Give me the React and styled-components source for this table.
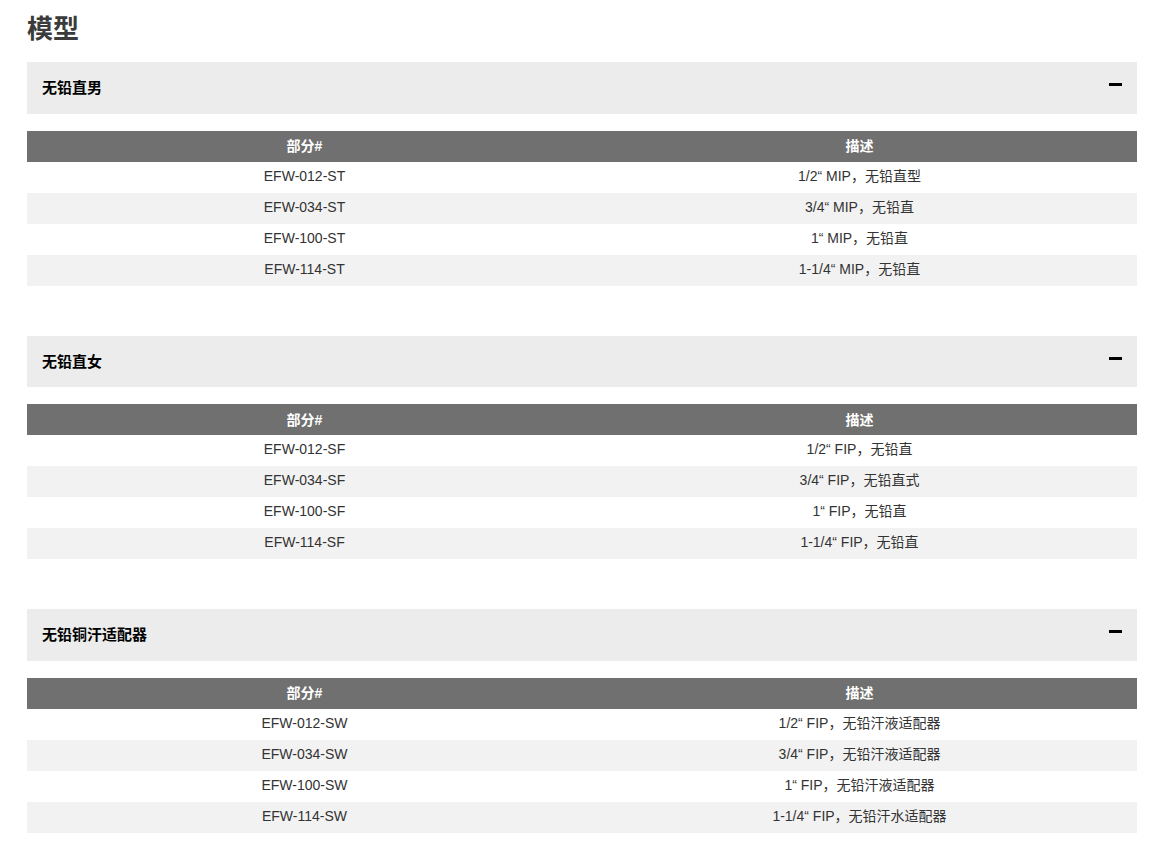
import styled, { createGlobalStyle } from 'styled-components';

const GlobalStyle = createGlobalStyle`
  body {
    margin: 0;
    background: #ffffff;
    font-family: "Liberation Sans", Arial, "Noto Sans CJK SC", sans-serif;
  }
`;

const sections = [
  {
    title: '无铅直男',
    rows: [
      ['EFW-012-ST', '1/2“ MIP，无铅直型'],
      ['EFW-034-ST', '3/4“ MIP，无铅直'],
      ['EFW-100-ST', '1“ MIP，无铅直'],
      ['EFW-114-ST', '1-1/4“ MIP，无铅直'],
    ],
  },
  {
    title: '无铅直女',
    rows: [
      ['EFW-012-SF', '1/2“ FIP，无铅直'],
      ['EFW-034-SF', '3/4“ FIP，无铅直式'],
      ['EFW-100-SF', '1“ FIP，无铅直'],
      ['EFW-114-SF', '1-1/4“ FIP，无铅直'],
    ],
  },
  {
    title: '无铅铜汗适配器',
    rows: [
      ['EFW-012-SW', '1/2“ FIP，无铅汗液适配器'],
      ['EFW-034-SW', '3/4“ FIP，无铅汗液适配器'],
      ['EFW-100-SW', '1“ FIP，无铅汗液适配器'],
      ['EFW-114-SW', '1-1/4“ FIP，无铅汗水适配器'],
    ],
  },
];

export default function App() {
  return (
    <Page>
      <GlobalStyle />
      <Title>模型</Title>
      {sections.map((s) => (
        <Section key={s.title}>
          <AccordionHead>
            <HeadText>{s.title}</HeadText>
            <Minus />
          </AccordionHead>
          <Table>
            <thead>
              <tr>
                <Th>部分#</Th>
                <Th>描述</Th>
              </tr>
            </thead>
            <tbody>
              {s.rows.map((r, i) => (
                <Row key={r[0]} $odd={i % 2 === 1}>
                  <Td>{r[0]}</Td>
                  <Td>{r[1]}</Td>
                </Row>
              ))}
            </tbody>
          </Table>
        </Section>
      ))}
    </Page>
  );
}

const Page = styled.div`
  width: 1110px;
  padding: 0 29px 0 27px;
`;

const Title = styled.h1`
  margin: 0;
  padding-top: 13px;
  height: 62px;
  box-sizing: border-box;
  font-family: "Liberation Sans", "Noto Sans CJK SC", sans-serif;
  font-size: 26px;
  font-weight: 700;
  line-height: 32px;
  color: #3b3b3b;
`;

const Section = styled.section`
  margin-bottom: 50px;
`;

const AccordionHead = styled.div`
  display: flex;
  align-items: center;
  justify-content: space-between;
  height: 51.5px;
  padding: 0 15px;
  background: #ececec;
  margin-bottom: 17px;
`;

const HeadText = styled.div`
  font-family: "Liberation Sans", "Noto Sans CJK SC", sans-serif;
  font-size: 15px;
  font-weight: 700;
  color: #000000;
  margin-top: -2px;
`;

const Minus = styled.span`
  display: block;
  width: 13px;
  height: 3px;
  background: #000000;
  margin-top: -6px;
`;

const Table = styled.table`
  width: 100%;
  border-collapse: collapse;
  table-layout: fixed;
`;

const Th = styled.th`
  height: 31px;
  padding: 0;
  background: #707070;
  color: #ffffff;
  font-family: "Liberation Sans", "Noto Sans CJK SC", sans-serif;
  font-size: 14px;
  font-weight: 700;
  line-height: 28px;
  text-align: center;
`;

const Row = styled.tr`
  background: ${(p) => (p.$odd ? '#f2f2f2' : '#ffffff')};
`;

const Td = styled.td`
  height: 31px;
  padding: 0;
  color: #333333;
  font-family: "Liberation Sans", "Noto Sans CJK SC", sans-serif;
  font-size: 14px;
  line-height: 28px;
  vertical-align: top;
  text-align: center;
`;
